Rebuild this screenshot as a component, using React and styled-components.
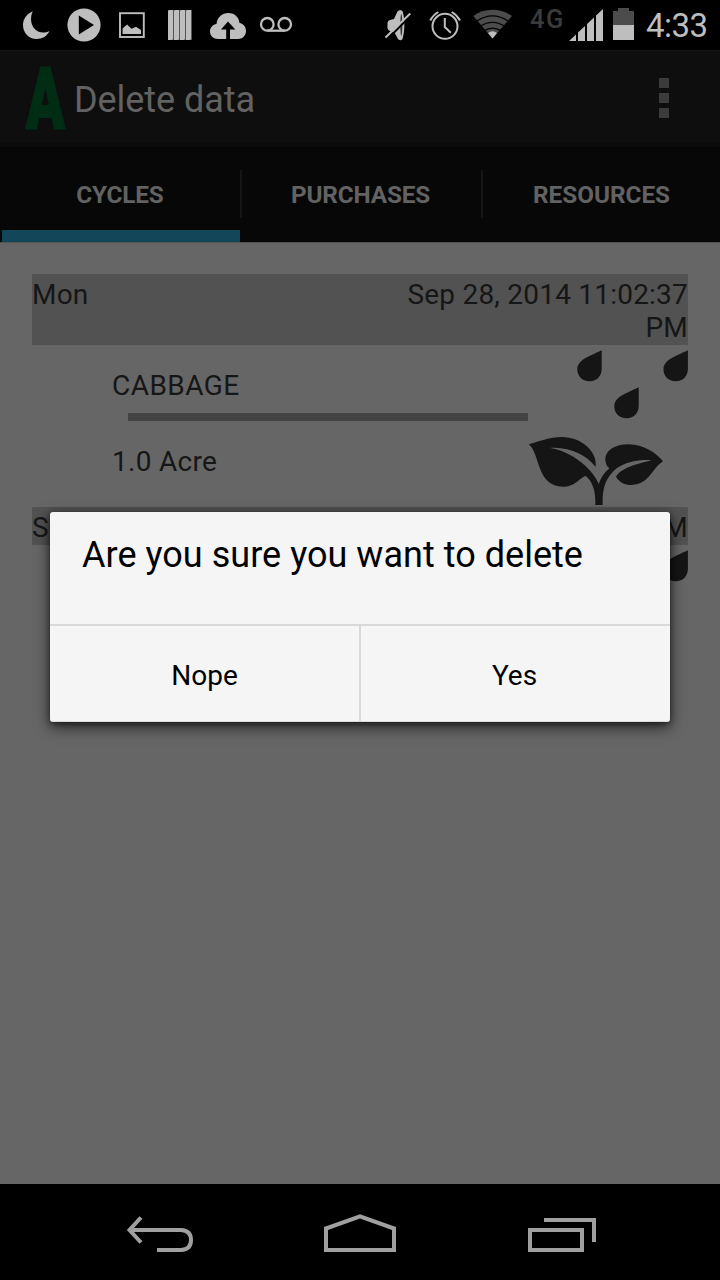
import React from "react";
import styled, { createGlobalStyle } from "styled-components";

const GlobalStyle = createGlobalStyle`
  * { box-sizing: border-box; }
  body { margin: 0; background: #000; }
`;

const LIGHT = "#bebebe";
const FAINT = "#4c4c4c";

const Screen = styled.div`
  position: relative;
  display: flex;
  flex-direction: column;
  width: 720px;
  height: 1280px;
  overflow: hidden;
  background: #666;
  font-family: Roboto, sans-serif;
`;

const StatusBar = styled.div`
  display: flex;
  flex: none;
  height: 50px;
  padding-left: 12px;
  background: #000;
`;

const StatusGroup = styled.div`
  display: flex;
  align-items: flex-start;
  margin-left: ${(p) => p.$offset || 0}px;
`;

const StatusIcon = styled.svg`
  display: block;
  flex: none;
  width: ${(p) => p.$width || 48}px;
  height: 50px;
`;

const NetworkType = styled.span`
  width: 38px;
  margin-left: 13px;
  padding-top: 4px;
  font-size: 25.5px;
  line-height: 30px;
  font-weight: 500;
  letter-spacing: 1.6px;
  color: #3b3b3b;
`;

const Clock = styled.span`
  margin-left: 8px;
  padding-top: 7px;
  font-size: 33px;
  line-height: 38px;
  letter-spacing: -0.5px;
  white-space: nowrap;
  color: ${LIGHT};
`;

const ActionBar = styled.header`
  display: flex;
  align-items: center;
  flex: none;
  height: 97px;
  padding: 2px 51px 0 26px;
  border-top: 1px solid #141414;
  border-bottom: 4px solid #0b0b0b;
  background: #0e0e0e;
`;

const Logo = styled.span`
  width: 40px;
  padding-top: 2px;
  font-size: 85px;
  line-height: 88px;
  font-weight: 900;
  color: #002d14;
  -webkit-text-stroke: 2px #002d14;
  transform: scaleX(0.67);
  transform-origin: left center;
`;

const Title = styled.h1`
  margin: 0 auto 0 8px;
  padding-top: 4px;
  font-size: 36px;
  line-height: 42px;
  font-weight: 400;
  letter-spacing: -0.05px;
  color: #626262;
`;

const Overflow = styled.div`
  display: flex;
  flex-direction: column;
  gap: 5px;
`;

const OverflowDot = styled.i`
  width: 10px;
  height: 10px;
  background: #3b3b3b;
`;

const Tabs = styled.nav`
  display: flex;
  align-items: flex-start;
  flex: none;
  height: 95px;
  padding-left: 2px;
  background: #070707;
`;

const Tab = styled.div`
  display: flex;
  flex: none;
  align-items: center;
  justify-content: center;
  width: ${(p) => p.$width}px;
  height: 95px;
  border-bottom: 12px solid ${(p) => (p.$active ? "#14465a" : "transparent")};
  padding: 12px ${(p) => p.$inset || 0}px 0 0;
  font-size: 24.3px;
  font-weight: 700;
  letter-spacing: ${(p) => p.$tracking || 0}px;
  color: #626262;
`;

const TabDivider = styled.i`
  flex: none;
  width: 2px;
  height: 48px;
  margin-top: 23px;
  background: #151515;
`;

const Content = styled.main`
  display: flex;
  flex: 1;
  flex-direction: column;
  gap: 2px;
  padding: 32px;
  box-shadow: inset 0 2px 1px -1px #555;
`;

const DateBar = styled.div`
  display: flex;
  justify-content: space-between;
  padding: 4px 0 1px;
  background: #525252;
  font-size: 28px;
  line-height: 33px;
  letter-spacing: 0.22px;
  color: #161616;
`;

const DateText = styled.span`
  max-width: 320px;
  text-align: right;
`;

const EntryBody = styled.div`
  display: flex;
  height: 160px;
`;

const EntryInfo = styled.div`
  display: flex;
  flex-direction: column;
  width: 496px;
`;

const EntryText = styled.span`
  padding: 24px 0 0 80px;
  font-size: 28px;
  line-height: 33px;
  letter-spacing: ${(p) => p.$tracking || 0}px;
  color: #161616;
`;

const Rule = styled.i`
  height: 8px;
  margin: 11px 0 0 96px;
  background: #434343;
`;

const PlantSvg = styled.svg`
  display: block;
  width: 160px;
  height: 160px;
`;

const Dialog = styled.div`
  position: absolute;
  left: 50px;
  top: 512px;
  display: flex;
  flex-direction: column;
  width: 620px;
  height: 210px;
  border-radius: 3px;
  border-bottom: 1px solid #d9d9d9;
  background: #f5f5f5;
  box-shadow: 0 5px 16px rgba(0, 0, 0, 0.6), 0 2px 6px rgba(0, 0, 0, 0.5);
  color: #000;
`;

const DialogMessage = styled.p`
  flex: none;
  height: 112px;
  margin: 0;
  padding: 22px 32px 0;
  font-size: 36px;
  line-height: 42px;
  letter-spacing: 0.03px;
`;

const DialogActions = styled.div`
  display: grid;
  flex: 1;
  grid-template-columns: 309px 311px;
  border-top: 2px solid #d9d9d9;
`;

const DialogButton = styled.button`
  padding: 3px 0 0;
  border: 0;
  background: none;
  font: 400 28px/33px Roboto, sans-serif;
  color: #000;

  & + & {
    padding-right: 2px;
    border-left: 2px solid #d9d9d9;
  }
`;

const NavBar = styled.footer`
  display: flex;
  flex: none;
  justify-content: space-between;
  height: 96px;
  padding: 0 124px;
  background: #000;
`;

const NavIcon = styled.svg`
  display: block;
  width: 72px;
  height: 96px;
  fill: none;
  stroke: #a0a0a0;
  stroke-width: 4;
`;

const DROP =
  "M73.7 5.3V23.5C73.7 31 69 36.3 61.5 36.3C54 36.3 49.3 31 49.3 24.5C49.3 15 60 12 73.7 5.3Z";

function Plant() {
  return (
    <PlantSvg viewBox="0 0 160 160" fill="#151515">
      <path d={DROP} />
      <path d={DROP} transform="translate(86.2 0)" />
      <path d={DROP} transform="translate(37 37)" />
      <g transform="translate(-28 -15) scale(.33333)">
        <path d="M86 343C122 372 108 470 190 470C222 470 237 447 256 437C275 450 288 480 286 525H308C306 470 320 440 350 415C380 395 420 388 455 391C420 400 365 412 348 440C360 460 378 465 395 465C450 462 455 415 489 394C470 370 430 343 385 343C340 343 316 365 316 387C316 400 320 408 328 415C312 428 302 445 296 462C280 420 220 365 150 354C210 350 260 376 287 411C293 365 245 321 185 321C150 321 115 335 86 343Z" />
      </g>
    </PlantSvg>
  );
}

function Entry({ day, date, crop, area }) {
  return (
    <section>
      <DateBar>
        <span>{day}</span>
        <DateText>{date}</DateText>
      </DateBar>
      <EntryBody>
        <EntryInfo>
          <EntryText $tracking={0.45}>{crop}</EntryText>
          <Rule />
          <EntryText $tracking={0.3}>{area}</EntryText>
        </EntryInfo>
        <Plant />
      </EntryBody>
    </section>
  );
}

function Notifications() {
  return (
    <StatusGroup>
      <StatusIcon viewBox="0 0 48 50" fill={LIGHT}>
        <path d="M20.8 11.3C14.5 14 11 19.5 11 25C11 33 17 39 24.5 39C30.5 39 35.2 36 37.5 31C32.5 33.5 26.5 33 22.8 29C18.5 24.5 18 17 20.8 11.3Z" />
      </StatusIcon>
      <StatusIcon viewBox="0 0 48 50" fill={LIGHT}>
        <circle cx="24" cy="25" r="16.6" />
        <path d="M18.8 15.5L34 25L18.8 34.5Z" fill="#000" />
      </StatusIcon>
      <StatusIcon viewBox="0 0 48 50" fill={LIGHT}>
        <rect x="12" y="13.2" width="23.8" height="23.8" fill="none" stroke={LIGHT} strokeWidth="1.9" />
        <path d="M14.6 34V28.5L19 24.5L23.5 28.8L28 26.8L33 30V34Z" />
      </StatusIcon>
      <StatusIcon viewBox="0 0 48 50">
        <path d="M12 10H36V40H12Z" fill="#555" />
        {[12, 18, 24, 30].map((x) => (
          <path key={x} d={`M${x} 11L${x + 1} 10H${x + 5}V39L${x + 4} 40H${x}Z`} fill={LIGHT} />
        ))}
      </StatusIcon>
      <StatusIcon viewBox="0 0 48 50" fill={LIGHT}>
        <path d="M14 39C9.5 39 6 36 6 31.5C6 27.5 9 24.5 12.5 24C13 17.5 18 13 24.5 13C31 13 35 17.5 35.5 23C39.5 23.5 42 27 42 31C42 35.5 38.5 39 34 39Z" />
        <path d="M24 21.5L31.3 29.5H26V39H22.2V29.5H17Z" fill="#000" />
      </StatusIcon>
      <StatusIcon viewBox="0 0 48 50" fill="none" stroke={LIGHT} strokeWidth="2.3">
        <circle cx="15.3" cy="24.3" r="6.3" />
        <circle cx="32.7" cy="24.3" r="6.3" />
        <path d="M15.3 30.7H32.7" />
      </StatusIcon>
    </StatusGroup>
  );
}

function SystemIcons() {
  return (
    <StatusGroup $offset={73}>
      <StatusIcon viewBox="373 0 48 50">
        <path d="M387.5 23Q387.5 20.500 390 20L394 19L397.500 11.500Q400.500 8.500 402.700 11.500C405 20 405 31 402.500 39Q400.500 41.500 398 39L394.500 32.500L390 31Q387.500 30 387.500 28Z" fill={LIGHT} />
        <ellipse cx="401.3" cy="25" rx="1" ry="11" fill="#333" />
        <path d="M387 39.5L411.5 15" stroke="#000" strokeWidth="2" />
        <path d="M385.5 37.5L410.3 13.5" stroke={LIGHT} strokeWidth="2" />
      </StatusIcon>
      <StatusIcon viewBox="421 0 48 50" fill="none" stroke={LIGHT} strokeWidth="2">
        <circle cx="445" cy="26.3" r="12.5" />
        <path d="M444.800 18V27L450.800 32.800M430.300 20.500Q432.800 15.300 438.300 12M451.700 12Q457.300 15.300 460 20.500" />
      </StatusIcon>
      <StatusIcon viewBox="469 0 48 50">
        <path d="M492.5 38.5L473.3 16Q482 9.7 492.5 9.7T512 16Z" fill={FAINT} />
        <g fill="none" stroke="#000" strokeWidth="1.2">
          <path d="M476.5 21.3Q492.5 10.5 508.5 21.3" />
          <path d="M480.5 26Q492.5 18.5 504.5 26" />
          <path d="M484 30.7Q492.5 25.5 501 30.7" />
        </g>
        <path d="M492.5 38.5L488 33Q492.5 29.5 497 33Z" fill={LIGHT} />
      </StatusIcon>
      <NetworkType>4G</NetworkType>
      <StatusIcon viewBox="568 0 36 50" $width={36} fill={LIGHT}>
        <path d="M569 41L576 34.4V41ZM578 41V32.5L585 25.9V41ZM587 41V24L594 17.4V41ZM596 41V15.5L603 9V41Z" />
      </StatusIcon>
      <StatusIcon viewBox="604 0 34 50" $width={34}>
        <path d="M613 11H618V8H629V11H634V25H613Z" fill={FAINT} />
        <path d="M613 25H634V40H613Z" fill={LIGHT} />
      </StatusIcon>
      <Clock>4:33</Clock>
    </StatusGroup>
  );
}

export default function App() {
  return (
    <Screen>
      <GlobalStyle />
      <StatusBar>
        <Notifications />
        <SystemIcons />
      </StatusBar>
      <ActionBar>
        <Logo>A</Logo>
        <Title>Delete data</Title>
        <Overflow>
          <OverflowDot />
          <OverflowDot />
          <OverflowDot />
        </Overflow>
      </ActionBar>
      <Tabs>
        <Tab $active $width={238} $inset={2} $tracking={-0.15}>CYCLES</Tab>
        <TabDivider />
        <Tab $width={239} $inset={2} $tracking={-0.15}>PURCHASES</Tab>
        <TabDivider />
        <Tab $width={237}>RESOURCES</Tab>
      </Tabs>
      <Content>
        <Entry day="Mon" date="Sep 28, 2014 11:02:37 PM" crop="CABBAGE" area="1.0 Acre" />
        <Entry day="Sun" date="PM" />
      </Content>
      <NavBar>
        <NavIcon viewBox="124 1184 72 96">
          <path d="M141 1217.5L129.5 1230L141 1242.5M129.5 1230H181Q191 1230.5 191 1240T181 1250H157" />
        </NavIcon>
        <NavIcon viewBox="324 1184 72 96">
          <path d="M326 1250V1228.5L360 1216.3L394 1228.5V1250Z" />
        </NavIcon>
        <NavIcon viewBox="524 1184 72 96">
          <path d="M530 1230H582V1250H530ZM544 1220H594V1242" />
        </NavIcon>
      </NavBar>
      <Dialog role="dialog">
        <DialogMessage>Are you sure you want to delete</DialogMessage>
        <DialogActions>
          <DialogButton>Nope</DialogButton>
          <DialogButton>Yes</DialogButton>
        </DialogActions>
      </Dialog>
    </Screen>
  );
}
